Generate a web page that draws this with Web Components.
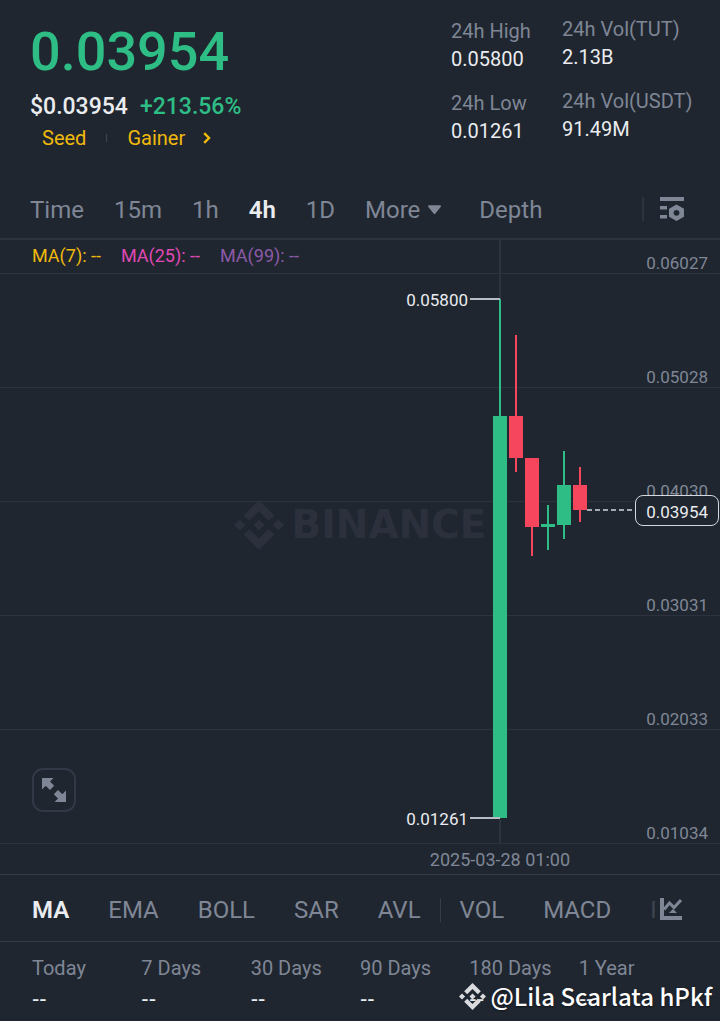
<!DOCTYPE html>
<html lang="en">
<head>
<meta charset="utf-8">
<meta name="viewport" content="width=device-width, initial-scale=1">
<title>TUT/USDT</title>
<style>
  :root {
    --bg: #1f2630;
    --line: #2c323e;
    --muted: #7f8695;
    --text: #eaecef;
    --up: #2ebd85;
    --down: #f6465d;
    --gold: #f0b90b;
  }
  body {
    margin: 0;
    background: var(--bg);
    color: var(--text);
    font-family: Roboto, "Liberation Sans", sans-serif;
  }
</style>
</head>
<body>
<market-page></market-page>

<script>
const LOGO = `
  <path d="M12 0 4.6 7.4l2.7 2.7L12 5.4l4.7 4.7 2.7-2.7z"/>
  <path d="M12 24l-7.4-7.4 2.7-2.7 4.7 4.7 4.7-4.7 2.7 2.7z"/>
  <path d="M2.7 9.3 5.4 12l-2.7 2.7L0 12zM21.3 9.3 24 12l-2.7 2.7-2.7-2.7zM12 9.3l2.7 2.7-2.7 2.7L9.3 12z"/>`;

class StatItem extends HTMLElement {
  connectedCallback() {
    this.attachShadow({ mode: 'open' }).innerHTML = `
      <style>
        :host { display: block; font-size: 20px; line-height: 28px; white-space: nowrap; }
        .label { color: var(--muted); }
      </style>
      <div class="label">${this.getAttribute('label')}</div>
      <div><slot></slot></div>
    `;
  }
}
customElements.define('stat-item', StatItem);

class PriceHeader extends HTMLElement {
  connectedCallback() {
    this.attachShadow({ mode: 'open' }).innerHTML = `
      <style>
        :host { display: flex; justify-content: space-between; padding: 0 30px 32px; }
        .price { margin-top: 20px; color: var(--up); font-size: 54px; line-height: 64px; font-weight: 500; }
        .sub { display: flex; gap: 12px; margin-top: 7px; font-size: 23px; line-height: 32px; font-weight: 500; }
        .change { color: var(--up); }
        .tags { display: flex; align-items: center; gap: 20px; margin-top: 3px; padding-left: 12px; font-size: 20px; line-height: 24px; }
        .tags a { color: var(--gold); text-decoration: none; display: flex; align-items: center; gap: 18px; }
        .tags i { width: 1px; height: 8px; background: #3d4452; }
        .stats { display: flex; gap: 29px; }
        .col { display: flex; flex-direction: column; gap: 16px; width: 128px; padding-top: 15px; }
        .col:first-child { width: 82px; padding-top: 17px; }
      </style>
      <div>
        <div class="price">0.03954</div>
        <div class="sub"><span>$0.03954</span><span class="change">+213.56%</span></div>
        <div class="tags">
          <a href="#seed">Seed</a><i></i>
          <a href="#gainer">Gainer
            <svg width="8" height="12" viewBox="0 0 8 12" fill="none" stroke="currentColor" stroke-width="2.4"><path d="M1.2 1.2 6 6l-4.8 4.8"/></svg>
          </a>
        </div>
      </div>
      <div class="stats">
        <div class="col">
          <stat-item label="24h High">0.05800</stat-item>
          <stat-item label="24h Low">0.01261</stat-item>
        </div>
        <div class="col">
          <stat-item label="24h Vol(TUT)">2.13B</stat-item>
          <stat-item label="24h Vol(USDT)">91.49M</stat-item>
        </div>
      </div>
    `;
  }
}
customElements.define('price-header', PriceHeader);

class TabButton extends HTMLElement {
  connectedCallback() {
    this.attachShadow({ mode: 'open' }).innerHTML = `
      <style>
        :host { display: block; }
        button {
          display: flex; align-items: center; gap: 8px;
          margin: 0; padding: 0; border: 0; background: none;
          color: var(--muted); font: 24px/32px Roboto, "Liberation Sans", sans-serif;
          white-space: nowrap; cursor: pointer;
        }
        :host([active]) button { color: var(--text); font-weight: 600; }
      </style>
      <button type="button"><slot></slot></button>
    `;
  }
}
customElements.define('tab-button', TabButton);

class IntervalBar extends HTMLElement {
  connectedCallback() {
    this.attachShadow({ mode: 'open' }).innerHTML = `
      <style>
        :host { display: flex; align-items: center; height: 56px; padding: 0 36px 0 30px; border-bottom: 2px solid var(--line); }
        nav { display: flex; flex: 1; gap: 30px; }
        .depth { margin-left: 8px; }
        .icon { display: flex; margin: 0 0 2px; padding: 0 0 0 16px; border: 0; border-left: 2px solid var(--line); background: none; color: var(--muted); }
      </style>
      <nav>
        <tab-button>Time</tab-button>
        <tab-button>15m</tab-button>
        <tab-button>1h</tab-button>
        <tab-button active>4h</tab-button>
        <tab-button>1D</tab-button>
        <tab-button>More
          <svg width="13" height="10" viewBox="0 0 14 10" fill="currentColor"><path d="M1 0h12a1 1 0 0 1 .8 1.6L7.8 9a1 1 0 0 1-1.6 0L.2 1.6A1 1 0 0 1 1 0z"/></svg>
        </tab-button>
        <tab-button class="depth">Depth</tab-button>
      </nav>
      <button class="icon" type="button" aria-label="Chart settings">
        <svg width="24" height="24" viewBox="0 0 24 24" fill="currentColor">
          <path d="M0 0h24v4H0zM0 9h7v3.500H0zM0 18h7v3.500H0z"/>
          <path fill-rule="evenodd" d="M16.500 7.500l7.500 4.200v8.100L16.500 24 9 19.800v-8.100zM16.500 12.900a2.900 2.900 0 1 0 0 5.800 2.900 2.900 0 0 0 0-5.800z"/>
        </svg>
      </button>
    `;
  }
}
customElements.define('interval-bar', IntervalBar);

class CandleChart extends HTMLElement {
  connectedCallback() {
    // x centre, wick top, wick bottom, body top, body bottom, colour
    const candles = [
      [200, 59, 578, 176, 578, 'up'],
      [216, 95, 232, 176, 218, 'down'],
      [232, 218, 316, 218, 287, 'down'],
      [248, 265, 310, 284, 287, 'up'],
      [264, 211, 299, 245, 285, 'up'],
      [280, 227, 282, 245, 270, 'down']
    ];
    const bars = candles.map(([x, high, low, top, bottom, dir]) => `
      <g fill="var(--${dir})">
        <rect x="${x - 1}" y="${high}" width="2" height="${low - high}"/>
        <rect x="${x - 7}" y="${top}" width="14" height="${bottom - top}"/>
      </g>`).join('');
    const rows = ['0.05028', '0.04030', '0.03031', '0.02033', '0.01034']
      .map(p => `<div class="row"><span>${p}</span></div>`).join('');

    this.attachShadow({ mode: 'open' }).innerHTML = `
      <style>
        :host { display: block; font-size: 18px; line-height: 20px; border-bottom: 1px solid #353c48; }
        .plot { position: relative; font-size: 17px; }
        .mark {
          position: absolute; inset: 260px 0 auto; display: flex; align-items: center; justify-content: center; gap: 8px;
          color: #2b303c; font: 700 39px/50px "DejaVu Sans", sans-serif;
        }
        .row {
          position: relative; box-sizing: border-box; height: 114px; padding-right: 12px;
          display: flex; align-items: flex-end; justify-content: flex-end;
          color: var(--muted); border-bottom: 1px solid var(--line);
        }
        .top { height: 34px; padding-left: 32px; justify-content: space-between; }
        .legend { display: flex; gap: 20px; align-self: center; padding-bottom: 2px; font-size: 18px; }
        .candles { position: absolute; top: 0; right: 0; }
        .candles text { font-size: 17px; fill: var(--text); }
        .last {
          position: absolute; top: 255px; right: 1px; box-sizing: border-box; height: 31px; padding: 0 10px;
          border: 1px solid #d5d8de; border-radius: 8px; background: var(--bg); line-height: 33px;
        }
        .expand {
          position: absolute; left: 32px; bottom: 32px; box-sizing: border-box; width: 44px; height: 44px; padding: 0;
          display: flex; align-items: center; justify-content: center;
          border: 2px solid #323946; border-radius: 11px; background: none; color: var(--muted);
        }
        .axis { display: flex; justify-content: flex-end; padding: 6px 150px 4px 0; color: var(--muted); }
      </style>
      <div class="plot">
        <div class="mark">
          <svg width="50" height="50" viewBox="0 0 24 24" fill="currentColor">${LOGO}</svg>
          <span>BINANCE</span>
        </div>
        <div class="row top">
          <div class="legend">
            <span style="color:#f0b90b">MA(7): --</span>
            <span style="color:#e048b4">MA(25): --</span>
            <span style="color:#8d5aa8">MA(99): --</span>
          </div>
          <span>0.06027</span>
        </div>
        ${rows}
        <svg class="candles" width="420" height="604" viewBox="0 0 420 604">
          <path d="M200 0v59M200 578v26" stroke="var(--line)" stroke-width="2"/>
          ${bars}
          <path d="M170 59h30M170 578h30" stroke="#b7bcc6" stroke-width="2"/>
          <path d="M287 270h46" stroke="#a4a9b4" stroke-width="2" stroke-dasharray="5 3"/>
          <text x="168" y="66" text-anchor="end">0.05800</text>
          <text x="168" y="585" text-anchor="end">0.01261</text>
        </svg>
        <div class="last">0.03954</div>
        <button class="expand" type="button" aria-label="Full screen">
          <svg width="24" height="24" viewBox="0 0 24 24" fill="currentColor"><path d="M0 0h11.500L8 3.500 12.200 7.700 8 12 3.700 7.700 0 11.500zM24 24H12.500L16 20.500 11.800 16.300 16 12l4.300 4.300L24 12.500z"/></svg>
        </button>
      </div>
      <div class="axis">2025-03-28 01:00</div>
    `;
  }
}
customElements.define('candle-chart', CandleChart);

class IndicatorBar extends HTMLElement {
  connectedCallback() {
    this.attachShadow({ mode: 'open' }).innerHTML = `
      <style>
        :host { display: flex; align-items: center; height: 62px; padding: 4px 37px 0 32px; border-bottom: 1px solid #353c48; }
        nav { display: flex; flex: 1; align-items: center; gap: 39px; min-width: 0; overflow: hidden; }
        nav i { width: 1px; height: 24px; margin: 0 -20px; background: #353c48; }
        .cut { width: 5px; overflow: hidden; opacity: .3; }
        .icon { display: flex; margin: 0 0 2px; padding: 0; border: 0; background: none; color: var(--muted); }
      </style>
      <nav>
        <tab-button active>MA</tab-button>
        <tab-button>EMA</tab-button>
        <tab-button>BOLL</tab-button>
        <tab-button>SAR</tab-button>
        <tab-button>AVL</tab-button>
        <i></i>
        <tab-button>VOL</tab-button>
        <tab-button>MACD</tab-button>
        <tab-button class="cut">R</tab-button>
      </nav>
      <button class="icon" type="button" aria-label="Indicators">
        <svg width="23" height="23" viewBox="0 0 23 23" fill="currentColor">
          <path d="M0 0h4v18h18v4H0z"/>
          <path d="M4 11.500 9.500 5l4.500 4.500L21 2" fill="none" stroke="currentColor" stroke-width="3"/>
          <path d="M13 11l4 4H9z"/>
        </svg>
      </button>
    `;
  }
}
customElements.define('indicator-bar', IndicatorBar);

class PerformanceRow extends HTMLElement {
  connectedCallback() {
    const periods = ['Today', '7 Days', '30 Days', '90 Days', '180 Days', '1 Year'];
    this.attachShadow({ mode: 'open' }).innerHTML = `
      <style>
        :host { display: block; padding: 14px 32px 10px; }
        table { width: 100%; table-layout: fixed; border-collapse: collapse; }
        th, td { padding: 0; text-align: left; font-weight: 400; white-space: nowrap; }
        th { color: var(--muted); font-size: 20px; line-height: 24px; }
        td { padding-top: 7px; font: 22px/24px "Liberation Sans", sans-serif; }
      </style>
      <table>
        <thead><tr>${periods.map(p => `<th>${p}</th>`).join('')}</tr></thead>
        <tbody><tr>${periods.map(() => '<td>--</td>').join('')}</tr></tbody>
      </table>
    `;
  }
}
customElements.define('performance-row', PerformanceRow);

class AuthorMark extends HTMLElement {
  connectedCallback() {
    this.attachShadow({ mode: 'open' }).innerHTML = `
      <style>
        :host {
          position: absolute; right: 8px; bottom: 7px; display: flex; align-items: center; gap: 4px;
          color: #fff; font: 500 24px/36px "Noto Sans CJK SC", sans-serif; white-space: nowrap;
          text-shadow: 0 1px 2px rgba(0, 0, 0, .5);
        }
        svg { color: #d9dbdf; }
      </style>
      <svg width="27" height="27" viewBox="0 0 24 24" fill="currentColor">${LOGO}</svg>
      <span><slot></slot></span>
    `;
  }
}
customElements.define('author-mark', AuthorMark);

class MarketPage extends HTMLElement {
  connectedCallback() {
    this.attachShadow({ mode: 'open' }).innerHTML = `
      <style>
        :host { display: block; position: relative; overflow: hidden; }
      </style>
      <price-header></price-header>
      <interval-bar></interval-bar>
      <candle-chart></candle-chart>
      <indicator-bar></indicator-bar>
      <performance-row></performance-row>
      <author-mark>@Lila Scarlata hPkf</author-mark>
    `;
  }
}
customElements.define('market-page', MarketPage);
</script>
</body>
</html>
